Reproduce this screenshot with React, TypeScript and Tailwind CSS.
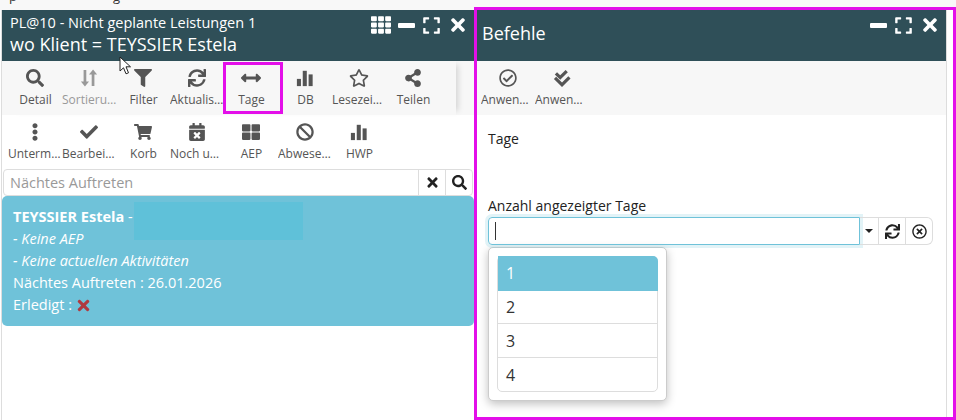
import React from "react";
import {
  FaSearch,
  FaFilter,
  FaSync,
  FaArrowsAltH,
  FaRegStar,
  FaShareAlt,
  FaEllipsisV,
  FaCheck,
  FaShoppingCart,
  FaCalendarTimes,
  FaThLarge,
  FaBan,
  FaTh,
  FaExpand,
  FaTimes,
  FaRegCheckCircle,
  FaRegTimesCircle,
} from "react-icons/fa";

const Bars = ({ className }: { className?: string }) => (
  <svg viewBox="0 0 20 20" className={className} fill="currentColor">
    <rect x="1" y="11" width="4.5" height="8" />
    <rect x="7.5" y="2" width="4.5" height="17" />
    <rect x="14" y="6" width="4.5" height="13" />
  </svg>
);

const SortArrows = ({ className }: { className?: string }) => (
  <svg viewBox="0 0 20 20" className={className} fill="currentColor">
    <path d="M4 1h3v13h3l-4.5 5.5L1 14h3z" />
    <path d="M13 19h3V6h3l-4.5-5.5L10 6h3z" />
  </svg>
);

const DoubleCheck = ({ className }: { className?: string }) => (
  <svg viewBox="0 0 20 20" className={className} fill="currentColor">
    <path d="M2 6l2.500-2.500L8 7l6-6 2.500 2.500L8 12z" />
    <path d="M1 11l2.500-2.500L10 15l7-7 2.500 2.500L10 20z" />
  </svg>
);

type Action = { label: string; icon: React.ReactNode; muted?: boolean; active?: boolean };

const iconCls = "w-[18px] h-[18px]";

const rowOne: Action[] = [
  { label: "Detail", icon: <FaSearch className={iconCls} /> },
  { label: "Sortierung", icon: <SortArrows className={iconCls} />, muted: true },
  { label: "Filter", icon: <FaFilter className={iconCls} /> },
  { label: "Aktualisieren", icon: <FaSync className={iconCls} /> },
  { label: "Tage", icon: <FaArrowsAltH className="w-5 h-5" />, active: true },
  { label: "DB", icon: <Bars className={iconCls} /> },
  { label: "Lesezeichen", icon: <FaRegStar className="w-5 h-5" /> },
  { label: "Teilen", icon: <FaShareAlt className={iconCls} /> },
];

const rowTwo: Action[] = [
  { label: "Untermenü", icon: <FaEllipsisV className={iconCls} /> },
  { label: "Bearbeiten", icon: <FaCheck className={iconCls} /> },
  { label: "Korb", icon: <FaShoppingCart className={iconCls} /> },
  { label: "Noch unerledigt", icon: <FaCalendarTimes className={iconCls} /> },
  { label: "AEP", icon: <FaThLarge className={iconCls} /> },
  { label: "Abwesenheit", icon: <FaBan className={iconCls} /> },
  { label: "HWP", icon: <Bars className={iconCls} /> },
];

const rightActions: Action[] = [
  { label: "Anwenden", icon: <FaRegCheckCircle className={iconCls} /> },
  { label: "Anwenden", icon: <DoubleCheck className={iconCls} /> },
];

function ToolButton({ action }: { action: Action }) {
  return (
    <div className={`relative w-[54px] h-[54px] flex flex-col items-center pt-[7px] shrink-0 ${action.muted ? "text-[#999]" : "text-[#555]"}`}>
      <div className="h-5 flex items-center justify-center">{action.icon}</div>
      <div className="w-[55px] self-start mt-[3px] text-[12px] leading-[17px] text-center truncate">{action.label}</div>
      {action.active && <div className="absolute left-[-1px] top-[1px] w-[60px] h-[52px] border-[3px] border-[#e30fe9]" />}
    </div>
  );
}

function WindowHeader({ grid, children }: { grid?: boolean; children: React.ReactNode }) {
  return (
    <div className="relative h-[51px] bg-[#2f4f58] text-white flex shrink-0">
      {children}
      <div className="absolute right-[6px] top-[5px] flex items-center gap-[7px] text-white">
        {grid && <FaTh className="w-[20px] h-[20px]" />}
        <div className="w-[17px] h-[5px] bg-white rounded-[1px]" />
        <FaExpand className="w-[19px] h-[19px]" />
        <FaTimes className="w-[20px] h-[20px]" />
      </div>
    </div>
  );
}

export default function App() {
  return (
    <div className="relative w-[956px] h-[420px] overflow-hidden flex bg-white font-['Open_Sans','Liberation_Sans',sans-serif]">
      {/* Liste links */}
      <div className="w-[474px] shrink-0 flex flex-col">
        <div className="h-[10px] bg-[#f8f8f8] overflow-hidden shrink-0">
          <div className="mt-[-13px] pl-[9px] flex gap-[96px] text-[13px] leading-[18px] text-[#333]">
            <span>p</span>
            <span>g</span>
          </div>
        </div>
        <div className="flex-1 flex flex-col ml-[1px] border-l border-[#ddd]">
          <WindowHeader grid>
            <div className="pl-[8px] pt-[3px]">
              <div className="text-[14.5px] leading-[20px]">PL@10 - Nicht geplante Leistungen 1</div>
              <div className="text-[18px] leading-[22px]">wo Klient = TEYSSIER Estela</div>
            </div>
          </WindowHeader>
          <div className="h-[54px] bg-[#f7f7f7] flex pl-[6px] shrink-0">
            <div className="flex w-[448px] shadow-[6px_0_6px_-4px_rgba(0,0,0,0.15)]">
              {rowOne.map((a) => (
                <ToolButton key={a.label} action={a} />
              ))}
            </div>
          </div>
          <div className="h-[54px] flex pl-[6px] shrink-0">
            {rowTwo.map((a) => (
              <ToolButton key={a.label} action={a} />
            ))}
          </div>
          <div className="h-[27px] mx-[1px] border border-[#ddd] rounded-[4px] flex items-center shrink-0">
            <div className="flex-1 pl-[6px] text-[14.5px] text-[#999]">Nächtes Auftreten</div>
            <div className="w-[27px] h-full border-l border-[#ddd] flex items-center justify-center text-[#222]">
              <FaTimes className="w-[15px] h-[15px]" />
            </div>
            <div className="w-[27px] h-full border-l border-[#ddd] flex items-center justify-center text-[#222]">
              <FaSearch className="w-[15px] h-[15px]" />
            </div>
          </div>
          <div className="relative h-[130px] bg-[#6fc2d9] rounded-[5px] text-white text-[14.5px] leading-[22px] px-[11px] pt-[10px] shrink-0">
            <div>
              <span className="font-bold">TEYSSIER Estela</span> -
            </div>
            <div className="italic">- Keine AEP</div>
            <div className="italic">- Keine actuellen Aktivitäten</div>
            <div>Nächtes Auftreten : 26.01.2026</div>
            <div className="flex items-center">
              Erledigt :<FaTimes className="w-[17px] h-[17px] ml-[3px] text-[#b0393f]" />
            </div>
            <div className="absolute left-[132px] top-[6px] w-[169px] h-[38px] bg-[#5fc1d9]" />
          </div>
        </div>
      </div>

      {/* Befehle rechts */}
      <div className="flex-1 bg-[#f8f8f8] pt-[7px] flex flex-col">
        <div className="flex-1 flex border-[3px] border-[#e30fe9] bg-white">
          <div className="w-[470px] border-r border-[#ddd] flex flex-col">
            <WindowHeader>
              <div className="pl-[5px] pt-[10px] text-[18px] leading-[26px]">Befehle</div>
            </WindowHeader>
            <div className="h-[54px] bg-[#f7f7f7] flex pl-[4px] shrink-0">
              {rightActions.map((a, i) => (
                <ToolButton key={i} action={a} />
              ))}
            </div>
            <div className="px-[11px]">
              <div className="mt-[14px] text-[14px] leading-[20px] font-medium text-[#222]">Tage</div>
              <div className="mt-[47px] text-[14px] leading-[20px] font-medium text-[#222]">Anzahl angezeigter Tage</div>
              <div className="mt-[1px] h-[28px] flex w-[445px]">
                <div className="w-[372px] h-full border border-[#6fc2d9] rounded-l-[4px] shadow-[0_0_0_3px_rgba(111,194,217,0.2)] flex items-center pl-[6px]">
                  <div className="w-px h-[18px] bg-[#333]" />
                </div>
                <div className="flex-1 flex border border-l-0 border-[#ddd] rounded-r-[6px] text-[#222]">
                  <div className="w-[18px] flex items-center justify-center">
                    <div className="w-0 h-0 border-x-[4px] border-x-transparent border-t-[4px] border-t-[#222]" />
                  </div>
                  <div className="w-[27px] border-l border-[#ddd] flex items-center justify-center">
                    <FaSync className="w-[15px] h-[15px]" />
                  </div>
                  <div className="flex-1 border-l border-[#ddd] flex items-center justify-center">
                    <FaRegTimesCircle className="w-[15px] h-[15px]" />
                  </div>
                </div>
              </div>
              <div className="mt-[2px] w-[179px] h-[154px] border border-[#ccc] rounded-[5px] bg-white shadow-[0_3px_10px_rgba(0,0,0,0.25)] p-[8px]">
                <div className="border border-[#ddd] rounded-[5px] text-[16px] text-[#333]">
                  <div className="h-[35px] -mt-px -mr-px pb-[2px] bg-[#6fc2d9] text-white rounded-tr-[5px] flex items-center pl-[8px]">1</div>
                  <div className="h-[33px] flex items-center pl-[8px] border-b border-[#ddd]">2</div>
                  <div className="h-[34px] flex items-center pl-[8px] border-b border-[#ddd]">3</div>
                  <div className="h-[33px] flex items-center pl-[8px]">4</div>
                </div>
              </div>
            </div>
          </div>
        </div>
      </div>

      {/* Mauszeiger */}
      <svg viewBox="0 0 14 20" className="absolute left-[119px] top-[56px] w-[14px] h-[20px]">
        <path d="M1 1v14l3.500-3.200 2.500 6 2.500-1-2.500-6H11.500z" fill="#fff" stroke="#222" strokeWidth="1" />
      </svg>
    </div>
  );
}
